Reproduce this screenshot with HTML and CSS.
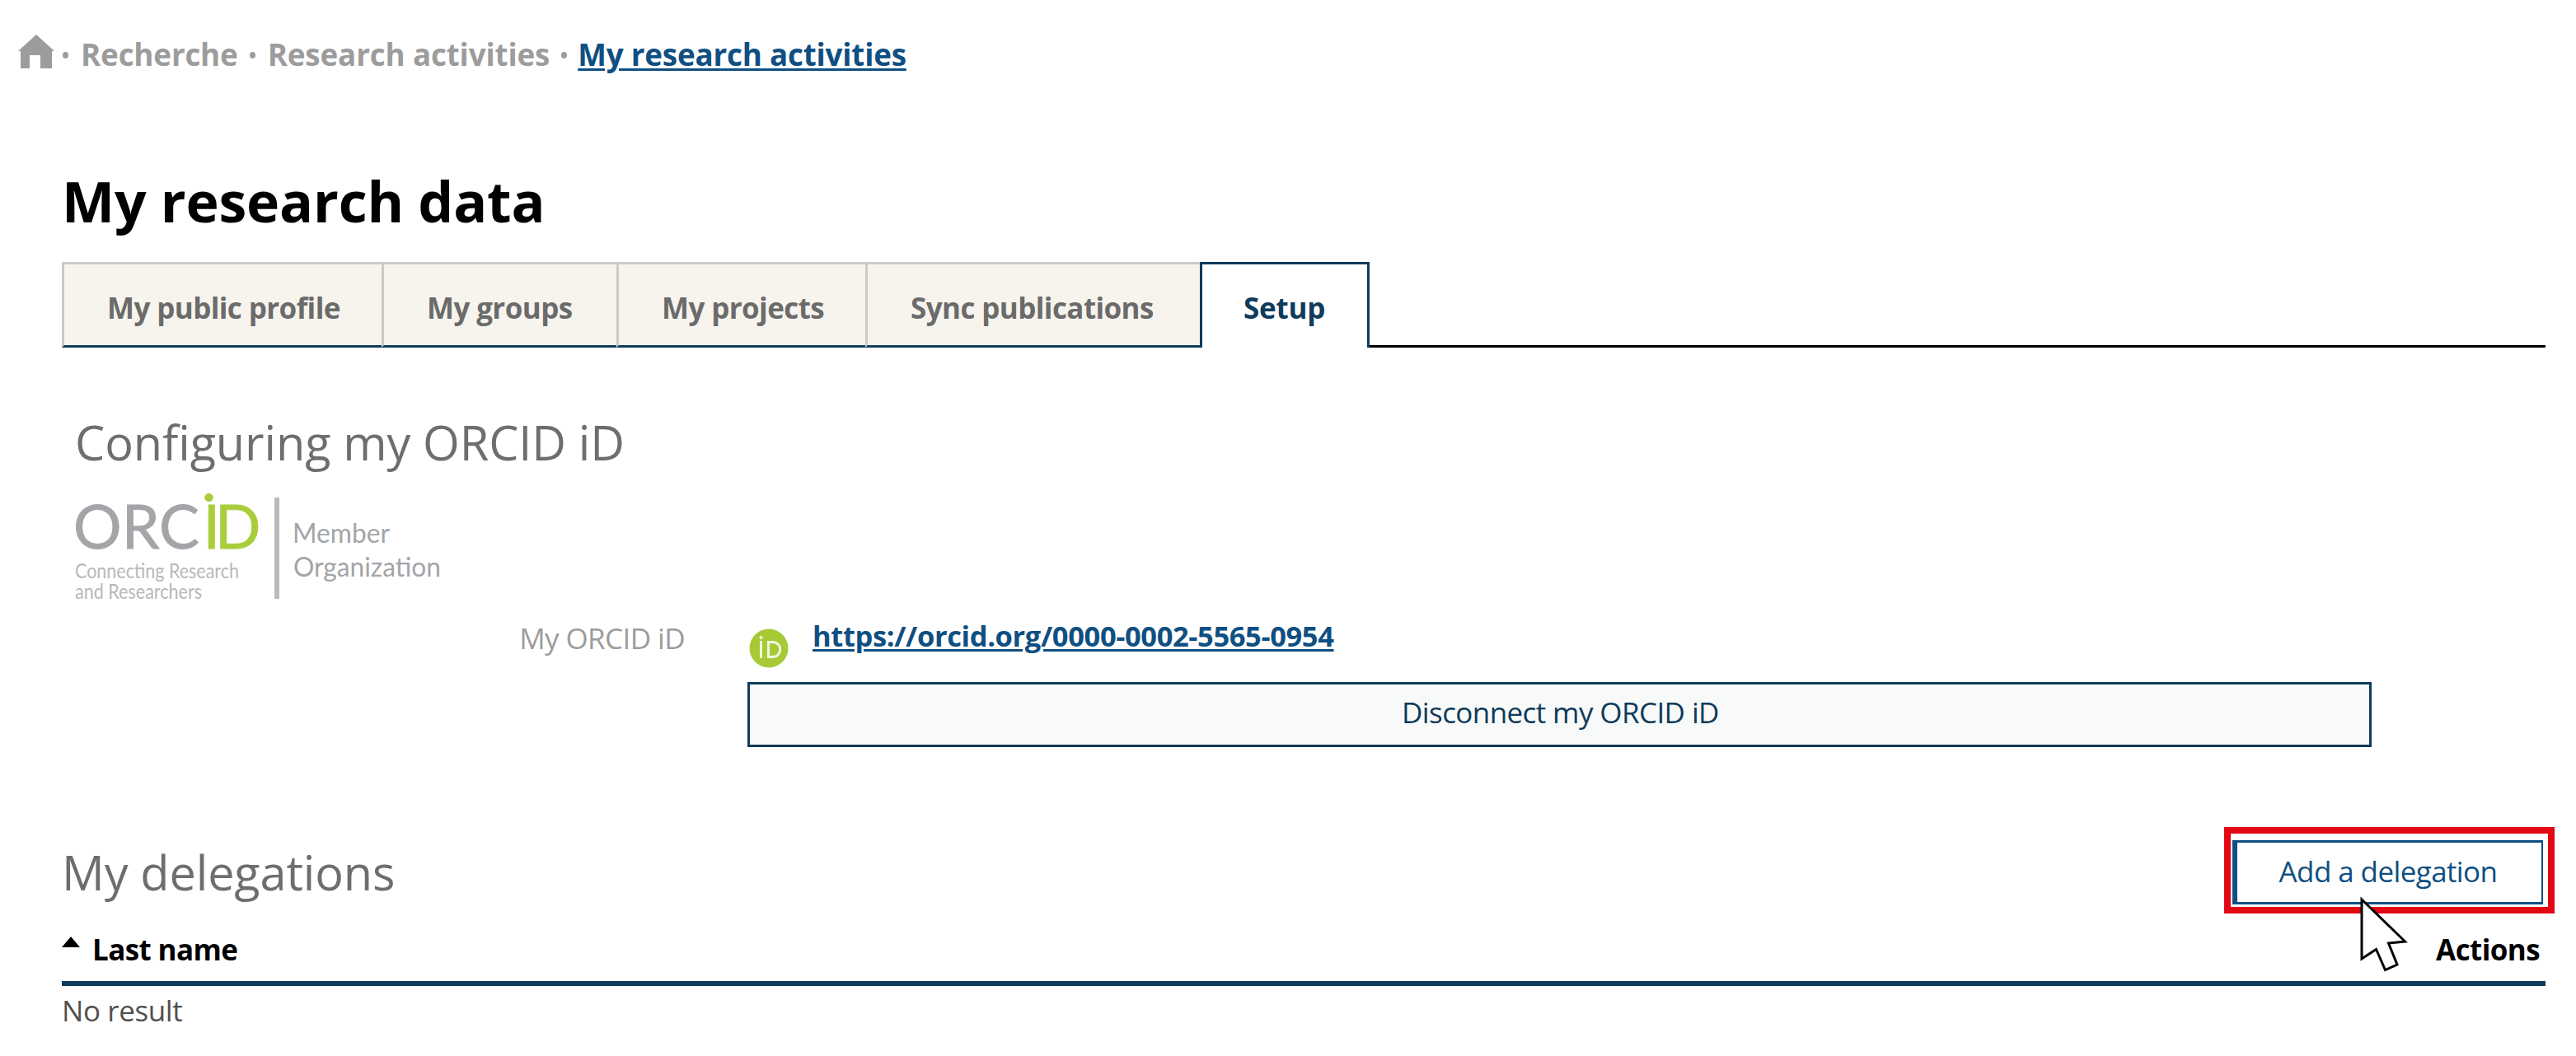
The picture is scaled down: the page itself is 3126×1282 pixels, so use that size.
FILE: index.html
```html
<!DOCTYPE html>
<html lang="en">
<head>
    <meta charset="UTF-8">
    <meta name="viewport" content="width=device-width, initial-scale=1.0">
    <title>My research data</title>
    <link rel="stylesheet" href="styles.css">
</head>
<body>
    <nav class="breadcrumb">
        <a class="home" href="#" aria-label="Home">
            <svg width="44" height="42" viewBox="0 0 44 42">
                <path d="M22 0 L44 20 H41 V41 H27 V25 H14 V41 H3 V20 H0 Z" fill="#9c9c9c"/>
            </svg>
        </a>
        <span class="dot"></span>
        <a class="crumb" href="#">Recherche</a>
        <span class="dot"></span>
        <a class="crumb wide" href="#">Research activities</a>
        <span class="dot"></span>
        <a class="crumb current" href="#">My research activities</a>
    </nav>

    <main>
        <h1>My research data</h1>

        <div class="tabs">
            <a class="tab" href="#">My public profile</a>
            <a class="tab" href="#">My groups</a>
            <a class="tab" href="#">My projects</a>
            <a class="tab" href="#">Sync publications</a>
            <a class="tab active" href="#">Setup</a>
            <div class="tab-line"></div>
        </div>

        <section class="orcid">
            <h2>Configuring my ORCID iD</h2>
            <svg class="logo" width="450" height="150" viewBox="90 590 450 150">
                <g class="logo-name">
                    <text x="89" y="666" textLength="153" lengthAdjust="spacingAndGlyphs">ORC</text>
                    <text class="green" x="246.5" y="666">ID</text>
                    <circle class="green" cx="253.5" cy="604" r="4.8"/>
                </g>
                <g class="logo-tagline">
                    <text x="91" y="702" textLength="199" lengthAdjust="spacingAndGlyphs">Connecting Research</text>
                    <text x="91" y="727" textLength="154" lengthAdjust="spacingAndGlyphs">and Researchers</text>
                </g>
                <rect x="333" y="604" width="6" height="123" fill="#b9bbbd"/>
                <g class="logo-member">
                    <text x="355" y="658.5" textLength="118" lengthAdjust="spacingAndGlyphs">Member</text>
                    <text x="356" y="700" textLength="179" lengthAdjust="spacingAndGlyphs">Organization</text>
                </g>
            </svg>

            <div class="field">
                <div class="field-label">My ORCID iD</div>
                <div class="field-value">
                    <div class="orcid-id">
                        <svg class="id-icon" width="48" height="48" viewBox="0 0 48 48">
                            <circle cx="24" cy="24" r="23.5" fill="#a6ca35"/>
                            <circle cx="14.5" cy="11" r="2" fill="#f1f7dc"/>
                            <path d="M14.5 15 V36 M23.5 16.5 V34.5 H28 C41 34.5 41 16.5 28 16.5 Z" fill="none" stroke="#f1f7dc" stroke-width="3"/>
                        </svg>
                        <a class="orcid-link" href="#">https://orcid.org/0000-0002-5565-0954</a>
                    </div>
                    <button class="disconnect">Disconnect my ORCID iD</button>
                </div>
            </div>
        </section>

        <section class="delegations">
            <div class="delegations-head">
                <h2>My delegations</h2>
                <div class="add-wrap">
                    <button class="add">Add a delegation</button>
                    <div class="highlight"></div>
                    <svg class="cursor" width="60" height="94" viewBox="0 0 60 94">
                        <path d="M3 4 L55.5 55 L35.5 57 L46 83 L31.5 89.5 L20.5 64.5 L3 76 Z" fill="#fff" stroke="#000" stroke-width="3"/>
                    </svg>
                </div>
            </div>
            <table>
                <thead>
                    <tr>
                        <th><span class="sort"></span>Last name</th>
                        <th class="actions">Actions</th>
                    </tr>
                </thead>
                <tbody>
                    <tr>
                        <td colspan="2">No result</td>
                    </tr>
                </tbody>
            </table>
        </section>
    </main>
</body>
</html>
```

FILE: styles.css
```css
* {
    box-sizing: border-box;
}
body {
    margin: 0;
    font-family: "Open Sans", sans-serif;
    font-size: 35px;
    letter-spacing: -0.4px;
    line-height: 50px;
    background-color: #fff;
    color: #000;
}
a {
    text-decoration: none;
}
h1, h2 {
    margin: 0;
}
button {
    font-family: inherit;
    font-size: 35px;
    letter-spacing: -0.6px;
    line-height: 50px;
    cursor: pointer;
}

/* Breadcrumb */
.breadcrumb {
    display: flex;
    align-items: center;
    height: 91px;
    padding: 41px 0 0 22px;
    font-size: 36.8px;
    letter-spacing: -0.2px;
    font-weight: bold;
}
.home {
    display: flex;
    margin-bottom: 7px;
}
.dot {
    width: 7px;
    height: 8px;
    margin: 1px 13px 0 14px;
    border-radius: 50%;
    background-color: #9c9c9c;
}
.home + .dot {
    margin: 1px 15px 0 10px;
}
.crumb {
    color: #9c9c9c;
}
.wide {
    letter-spacing: -0.15px;
    margin-left: 2px;
}
.current {
    color: #0f4f82;
    text-decoration: underline;
    text-decoration-thickness: 3px;
    text-underline-offset: 3px;
}

main {
    padding: 108px 37px 0 75px;
}
h1 {
    font-size: 68px;
    letter-spacing: -0.2px;
    line-height: 90px;
}
h2 {
    font-size: 57.6px;
    letter-spacing: -0.1px;
    font-weight: normal;
    line-height: 80px;
    color: #6e6e6e;
}

/* Tabs */
.tabs {
    display: grid;
    grid-template-columns: 388px 285px 302px 406px 206px 1fr;
    height: 104px;
    margin-top: 29px;
}
.tab {
    padding: 28px 0 0 52px;
    border: 3px solid #cacaca;
    border-right: none;
    border-bottom-color: #0f3b5c;
    background-color: #f7f4ed;
    letter-spacing: -0.6px;
    font-weight: bold;
    color: #6b6b6b;
}
.active {
    padding-left: 50px;
    border: 3px solid #0f3b5c;
    border-bottom: none;
    background-color: #fff;
    letter-spacing: -0.2px;
    color: #0f3b5c;
}
.tab-line {
    border-bottom: 3px solid #000;
}

/* ORCID */
.orcid {
    padding: 75px 0 0 16px;
}
.logo {
    display: block;
    margin: 13px 0 0 -1px;
    font-family: Lato, sans-serif;
    letter-spacing: 0;
    fill: #a3a5a8;
}
.logo-name {
    font-size: 73px;
    stroke: #a3a5a8;
    stroke-width: 0.8px;
}
.green {
    fill: #a9cd3b;
    stroke: #a9cd3b;
    letter-spacing: -6px;
}
.logo-tagline {
    font-size: 25px;
    fill: #b6b8ba;
}
.logo-member {
    font-size: 32px;
}
.field {
    display: grid;
    grid-template-columns: 740px 1971px;
    column-gap: 76px;
    padding-top: 7px;
}
.field-label {
    padding-top: 3px;
    letter-spacing: -0.6px;
    text-align: right;
    color: #9c9c9c;
}
.orcid-id {
    display: flex;
    align-items: flex-start;
    gap: 29px;
    height: 81px;
    padding-left: 2px;
}
.id-icon {
    margin-top: 16px;
}
.orcid-link {
    font-size: 34.5px;
    letter-spacing: -0.38px;
    font-weight: bold;
    color: #0f4f82;
    text-decoration: underline;
    text-decoration-thickness: 3px;
    text-underline-offset: 3px;
}
.disconnect {
    display: block;
    width: 100%;
    height: 79px;
    padding: 0 0 5px 2px;
    border: 3px solid #103b5a;
    background-color: #f8faf9;
    color: #103b5a;
}

/* Delegations */
.delegations {
    padding-top: 112px;
}
.delegations-head {
    display: flex;
    justify-content: space-between;
    height: 80px;
}
.add-wrap {
    position: relative;
    margin: 1px 3px 0 0;
}
.add {
    width: 377px;
    height: 78px;
    padding: 0 3px 2px 0;
    border: 3px solid #0f4f82;
    border-left-width: 6px;
    border-right-width: 2px;
    background-color: #fff;
    color: #0f4f82;
}
.highlight {
    position: absolute;
    top: -16px;
    left: -10px;
    width: 401px;
    height: 105px;
    border: 8px solid #e30613;
}
.cursor {
    position: absolute;
    top: 68px;
    left: 154px;
}
table {
    width: 100%;
    border-collapse: collapse;
}
th {
    padding: 29px 0 13px;
    border-bottom: 6px solid #0f3b5c;
    letter-spacing: -0.6px;
    text-align: left;
}
td {
    padding: 5px 0 0;
    color: #505050;
}
.sort {
    display: inline-block;
    margin-right: 15px;
    border: 11px solid transparent;
    border-top: none;
    border-bottom: 13px solid #000;
    vertical-align: 16px;
}
.actions {
    padding-right: 7px;
    text-align: right;
}
```
